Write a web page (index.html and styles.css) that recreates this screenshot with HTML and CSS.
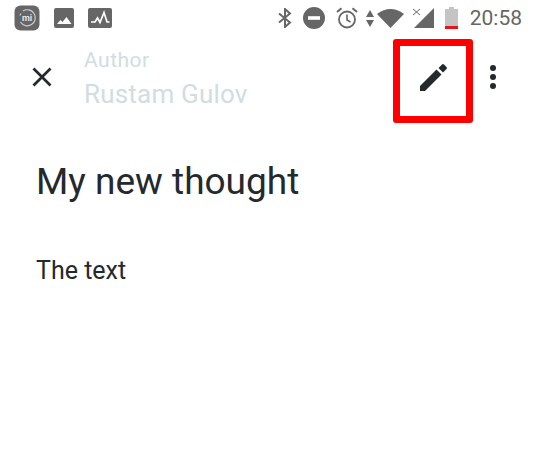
FILE: index.html
```html
<!DOCTYPE html>
<html lang="en">
<head>
    <meta charset="UTF-8">
    <meta name="viewport" content="width=device-width, initial-scale=1.0">
    <title>My new thought</title>
    <link rel="stylesheet" href="styles.css">
</head>
<body>
    <div class="status-bar">
        <div class="status-left">
            <svg class="icon-mi" width="26" height="26" viewBox="0 0 26 26">
                <rect x="0.5" y="0.5" width="25" height="25" rx="6" fill="#666"/>
                <path d="M6.5 17 A8 8 0 1 0 9 6" fill="none" stroke="#ccc" stroke-width="1.2"/>
                <path d="M7 8.5 L5.8 10.5" stroke="#ccc" stroke-width="1.2"/>
                <text x="13" y="15.8" class="mi-text">mi</text>
            </svg>
            <svg class="icon-image" width="20" height="20" viewBox="0 0 20 20">
                <rect x="0" y="0" width="20" height="20" rx="2" fill="#666"/>
                <path d="M3 16 L6.5 12 L8.5 14 L12.5 9 L17.5 16 Z" fill="#fff"/>
            </svg>
            <svg class="icon-pulse" width="24" height="20" viewBox="0 0 24 20">
                <rect x="0" y="0" width="24" height="20" rx="2" fill="#666"/>
                <path d="M3 14 H7 L9.5 10 L12 14.5 L16 4.5 L19 14 H21.5" fill="none" stroke="#fff" stroke-width="1.7"/>
            </svg>
        </div>
        <div class="status-right">
            <svg class="icon-bt" width="14" height="20" viewBox="0 0 14 20">
                <path d="M1 5.5 L12 14.5 L7 19 V1 L12 5.5 L1 14.5" fill="none" stroke="#666" stroke-width="2"/>
            </svg>
            <svg class="icon-dnd" width="22" height="22" viewBox="0 0 22 22">
                <circle cx="11" cy="11" r="11" fill="#666"/>
                <rect x="5" y="9.2" width="12" height="3.6" fill="#fff"/>
            </svg>
            <svg class="icon-alarm" width="22" height="22" viewBox="0 0 22 22">
                <circle cx="11" cy="12.5" r="8" fill="none" stroke="#666" stroke-width="1.8"/>
                <path d="M11 7.5 V13 L14.5 15" fill="none" stroke="#666" stroke-width="1.6"/>
                <path d="M1 5 L5.5 1.2 M21 5 L16.5 1.2" stroke="#666" stroke-width="2"/>
            </svg>
            <svg class="icon-arrows" width="8" height="17" viewBox="0 0 8 17">
                <path d="M4 0 L8 7 H0 Z M4 17 L0 10 H8 Z" fill="#666"/>
            </svg>
            <svg class="icon-wifi" width="27" height="19" viewBox="0 0 27 19">
                <path d="M0 5 Q13.5 -5 27 5 L13.5 19 Z" fill="#666"/>
            </svg>
            <svg class="icon-signal" width="22" height="20" viewBox="0 0 22 20">
                <path d="M22 0 V20 H2 Z" fill="#666"/>
                <path d="M1 1 L8 7 M8 1 L1 7" stroke="#666" stroke-width="1"/>
            </svg>
            <svg class="icon-battery" width="15" height="22" viewBox="0 0 15 22">
                <path d="M5 0 H10 V2 H14 V22 H1 V2 H5 Z" fill="#c4c4c4"/>
                <rect x="1" y="19" width="13" height="3" fill="#e8141c"/>
            </svg>
            <span class="clock">20:58</span>
        </div>
    </div>

    <div class="toolbar">
        <svg class="close-icon" width="20" height="20" viewBox="0 0 20 20">
            <path d="M1.5 1.5 L18.5 18.5 M18.5 1.5 L1.5 18.5" stroke="#24292e" stroke-width="2.7"/>
        </svg>
        <div class="author">
            <div class="author-label">Author</div>
            <div class="author-name">Rustam Gulov</div>
        </div>
        <svg class="edit-icon" width="28" height="28" viewBox="0 0 28 28">
            <path d="M0 28 V23 L16.5 6.5 L21.5 11.5 L5 28 Z M18.5 5 L22 1.5 Q23 0.5 24 1.5 L26.5 4 Q27.5 5 26.5 6 L23 9.5 Z" fill="#24292e"/>
        </svg>
        <div class="more-icon">
            <span class="dot"></span>
            <span class="dot"></span>
            <span class="dot"></span>
        </div>
        <div class="highlight"></div>
    </div>

    <div class="content">
        <h1 class="note-title">My new thought</h1>
        <p class="note-text">The text</p>
    </div>
</body>
</html>
```

FILE: styles.css
```css
body {
    margin: 0;
    width: 534px;
    height: 462px;
    overflow: hidden;
    background-color: #fff;
    font-family: Roboto, sans-serif;
}

.status-bar {
    display: flex;
    justify-content: space-between;
    align-items: center;
    height: 36px;
    padding: 0 12px 0 14px;
}

.status-left {
    display: flex;
    align-items: center;
    gap: 14px;
}

.mi-text {
    font-family: Roboto, sans-serif;
    font-size: 9px;
    font-weight: 700;
    fill: #e4e4e4;
    text-anchor: middle;
}

.status-right {
    display: flex;
    align-items: center;
    gap: 8px;
}

.icon-dnd,
.icon-alarm {
    margin-left: 3px;
}

.icon-battery {
    margin-left: 2px;
}

.icon-arrows {
    margin-right: -5px;
}

.clock {
    margin-left: 3px;
    font-size: 21px;
    color: #666;
}

.toolbar {
    position: relative;
    display: flex;
    align-items: center;
    height: 82px;
    padding: 0 38px 0 32px;
}

.author {
    flex: 1;
    margin-left: 32px;
    color: #d0dde1;
}

.author-label {
    font-size: 21px;
    line-height: 34px;
    letter-spacing: 0.5px;
}

.author-name {
    font-size: 26px;
    line-height: 34px;
    letter-spacing: 0.2px;
}

.edit-icon {
    margin-right: 42px;
}

.more-icon {
    display: flex;
    flex-direction: column;
    gap: 3px;
}

.dot {
    width: 6px;
    height: 6px;
    border-radius: 50%;
    background-color: #24292e;
}

/* red box drawn over the edit button */
.highlight {
    position: absolute;
    left: 393px;
    top: 3px;
    width: 66px;
    height: 70px;
    border: 7px solid #ff0000;
    border-radius: 3px;
}

.content {
    padding: 40px 36px 0;
    color: #24292e;
}

.note-title {
    margin: 0;
    font-size: 37px;
    font-weight: 400;
    line-height: 48px;
}

.note-text {
    margin: 49px 0 0;
    font-size: 25px;
    line-height: 32px;
}
```
